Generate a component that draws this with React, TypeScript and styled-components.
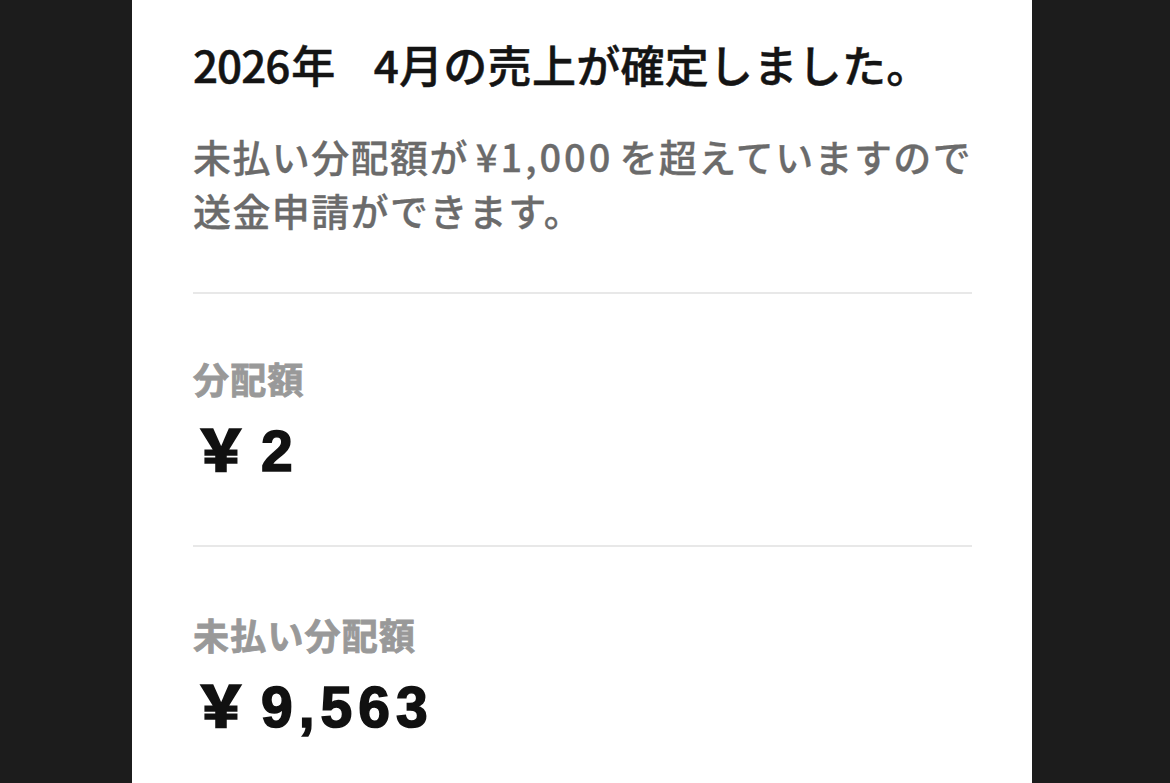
import React from "react";
import styled, { createGlobalStyle } from "styled-components";

const GlobalStyle = createGlobalStyle`
  html, body { margin: 0; padding: 0; background: #1c1c1c; }
  body { font-family: "Noto Sans CJK JP", "Noto Sans", sans-serif; }
`;

const Stage = styled.div`
  display: grid;
  grid-template-columns: 132px 900px 1fr;
  height: 783px;
  overflow: hidden;
  background: #1c1c1c;
`;

const Panel = styled.main`
  grid-column: 2;
  background: #ffffff;
  padding: 32px 60px 0 61px;
  display: flex;
  flex-direction: column;
`;

const Title = styled.h1`
  margin: 0;
  font-size: 44px;
  font-weight: 500;
  line-height: 64px;
  letter-spacing: 0.3px;
  color: #141414;
  white-space: nowrap;
  -webkit-text-stroke: 0.5px #141414;
`;

const Year = styled.span`
  letter-spacing: -1px;
  margin-right: 2px;
`;

const Gap = styled.span`
  display: inline-block;
  width: 38px;
`;

const Lead = styled.p`
  margin: 33px 0 0;
  font-size: 38px;
  font-weight: 500;
  line-height: 54px;
  letter-spacing: 1.4px;
  color: #6b6b6b;
  white-space: nowrap;
  -webkit-text-stroke: 0.3px #6b6b6b;
`;

const Money = styled.span`
  letter-spacing: 3px;
  margin: 0 6px 0 7px;
`;

const Divider = styled.hr`
  margin: 0;
  border: none;
  height: 2px;
  background: #e8e8e8;
`;

const Section = styled.section<{ $top: number }>`
  display: flex;
  flex-direction: column;
  padding: ${(p) => p.$top}px 0 0;
`;

const Label = styled.div`
  font-size: 36px;
  font-weight: 700;
  line-height: 44px;
  letter-spacing: 1.2px;
  color: #999999;
  -webkit-text-stroke: 0.8px #999999;
`;

const Amount = styled.div`
  margin-top: 19px;
  display: flex;
  align-items: baseline;
  gap: 12px;
  line-height: 56px;
  color: #111111;
  -webkit-text-stroke: 1.6px #111111;
`;

const Yen = styled.span`
  font-family: "Noto Sans CJK JP", sans-serif;
  font-size: 56px;
  font-weight: 900;
`;

const Digits = styled.span`
  font-family: "Liberation Sans", Arial, sans-serif;
  font-size: 57px;
  font-weight: 700;
  letter-spacing: 6px;
`;

const Spacer = styled.div<{ $h: number }>`
  height: ${(p) => p.$h}px;
`;

export default function App() {
  return (
    <Stage>
      <GlobalStyle />
      <Panel>
        <Title>
          <Year>2026</Year>年<Gap />4月の売上が確定しました。
        </Title>
        <Lead>
          未払い分配額が<Money>¥1,000</Money>を超えていますので
          <br />
          送金申請ができます。
        </Lead>
        <Spacer $h={55} />
        <Divider />
        <Section $top={62}>
          <Label>分配額</Label>
          <Amount>
            <Yen>￥</Yen>
            <Digits>2</Digits>
          </Amount>
        </Section>
        <Spacer $h={66} />
        <Divider />
        <Section $top={65}>
          <Label>未払い分配額</Label>
          <Amount>
            <Yen>￥</Yen>
            <Digits>9,563</Digits>
          </Amount>
        </Section>
      </Panel>
    </Stage>
  );
}
